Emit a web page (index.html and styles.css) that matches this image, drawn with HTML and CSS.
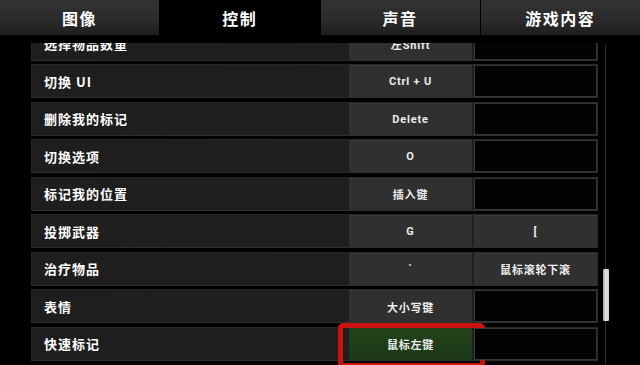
FILE: index.html
```html
<!DOCTYPE html>
<html lang="zh-CN">
<head>
    <meta charset="UTF-8">
    <title>控制设置</title>
    <meta name="viewport" content="width=device-width, initial-scale=1.0">
    <link rel="stylesheet" href="styles.css">
</head>
<body>
    <div class="tabs">
        <div class="tab">图像</div>
        <div class="tab active">控制</div>
        <div class="tab">声音</div>
        <div class="tab">游戏内容</div>
    </div>
    <div class="viewport">
        <div class="list">
            <div class="row">
                <div class="label">选择物品数量</div>
                <div class="key">左Shift</div>
                <div class="key empty"></div>
            </div>
            <div class="row">
                <div class="label">切换 UI</div>
                <div class="key">Ctrl + U</div>
                <div class="key empty"></div>
            </div>
            <div class="row">
                <div class="label">删除我的标记</div>
                <div class="key">Delete</div>
                <div class="key empty"></div>
            </div>
            <div class="row">
                <div class="label">切换选项</div>
                <div class="key">O</div>
                <div class="key empty"></div>
            </div>
            <div class="row">
                <div class="label">标记我的位置</div>
                <div class="key">插入键</div>
                <div class="key empty"></div>
            </div>
            <div class="row">
                <div class="label">投掷武器</div>
                <div class="key">G</div>
                <div class="key">[</div>
            </div>
            <div class="row">
                <div class="label">治疗物品</div>
                <div class="key">`</div>
                <div class="key">鼠标滚轮下滚</div>
            </div>
            <div class="row">
                <div class="label">表情</div>
                <div class="key">大小写键</div>
                <div class="key empty"></div>
            </div>
            <div class="row">
                <div class="label">快速标记</div>
                <div class="key selected">鼠标左键<span class="ring"></span></div>
                <div class="key empty"></div>
            </div>
        </div>
        <div class="scroll-track">
            <div class="scroll-thumb"></div>
        </div>
    </div>
</body>
</html>
```

FILE: styles.css
```css
* { margin: 0; padding: 0; box-sizing: border-box; }
html, body { height: 100%; }
body {
    font-family: Roboto, "Noto Sans CJK SC", sans-serif;
    background: #000;
    color: #fff;
    overflow: hidden;
}
.tabs {
    display: flex;
    gap: 1px;
    height: 35px;
    background: #000;
    position: relative;
    z-index: 2;
}
.tab {
    flex: 1;
    display: flex;
    align-items: center;
    justify-content: center;
    font-family: "Noto Sans CJK SC", sans-serif;
    font-size: 16px;
    font-weight: 700;
    letter-spacing: 1.5px;
    background: linear-gradient(180deg, #333 0%, #2a2a2a 60%, #1e1e1e 100%);
}
.tab.active { background: #000; }

.viewport {
    display: flex;
    gap: 5px;
    height: 322px;
    margin-top: 8px;
    padding-left: 31px;
    overflow: hidden;
}
.list {
    width: 567px;
    margin-top: -16.5px;
}
.row {
    display: flex;
    height: 34px;
    margin-bottom: 3.5px;
    background: linear-gradient(90deg, #1e1e1e 0%, #1f1f1f 88%, #282828 100%);
    border-top: 1px solid #262626;
    border-bottom: 1px solid #2e2e2e;
    border-left: 1px solid #262626;
    padding-right: 1px;
}
.label {
    flex: 1;
    display: flex;
    align-items: center;
    padding-left: 12px;
    font-family: "Noto Sans CJK SC", sans-serif;
    font-size: 13px;
    font-weight: 700;
    letter-spacing: 1px;
}
.key {
    position: relative;
    width: 123px;
    margin-left: 2px;
    display: flex;
    align-items: center;
    justify-content: center;
    background: #303030;
    border-top: 1px solid #383838;
    font-family: Roboto, "Noto Sans CJK SC", sans-serif;
    font-size: 11px;
    font-weight: 700;
    letter-spacing: 0.8px;
    color: #ececec;
}
.key:first-of-type { margin-left: 0; }
.key.empty {
    background: #030303;
    border: 1.5px solid #363636;
}
.key.selected {
    background: linear-gradient(180deg, #22431b 0%, #1c3816 100%);
    border-top: none;
}
.ring {
    position: absolute;
    top: -5px;
    left: -11px;
    right: -13px;
    bottom: -8px;
    border: 5px solid #c9130e;
    border-radius: 5px;
}

.scroll-track {
    width: 6px;
    margin-top: 1px;
    background: linear-gradient(90deg, transparent 0, transparent 2px, #2a2a2a 2px, #2a2a2a 3px, transparent 3px);
}
.scroll-thumb {
    margin-top: 225px;
    height: 52px;
    border-radius: 1px;
    background: linear-gradient(90deg, #9a9a9a 0%, #e0e0e0 40%, #cfcfcf 100%);
}
```
